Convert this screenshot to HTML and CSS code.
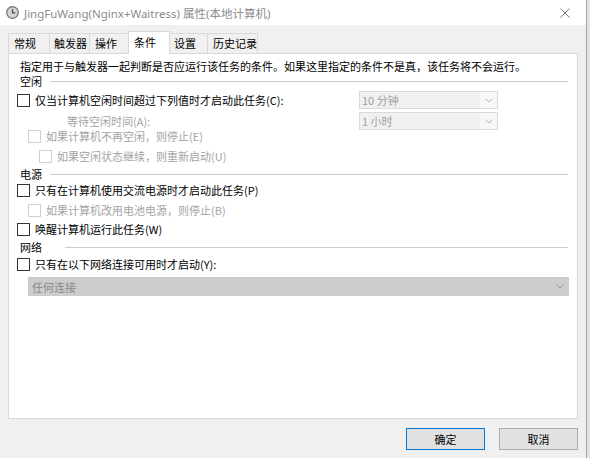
FILE: index.html
```html
<!DOCTYPE html>
<html lang="zh-CN">
<head>
<meta charset="utf-8">
<title>属性</title>
<link rel="stylesheet" href="styles.css">
</head>
<body>
<div class="window">
  <div class="titlebar">
    <svg class="app-icon" viewBox="0 0 13 13" width="13" height="13">
      <circle cx="6.5" cy="6.5" r="5.8" fill="#d4d4d4" stroke="#6e6e6e" stroke-width="1.2"/>
      <path d="M6.5 3.2 V6.8 H9.3" fill="none" stroke="#444" stroke-width="1.3"/>
    </svg>
    <span class="title">JingFuWang(Nginx+Waitress) 属性(本地计算机)</span>
    <svg class="close" viewBox="0 0 10 10" width="10" height="10">
      <path d="M0.5 0.5 L9.5 9.5 M9.5 0.5 L0.5 9.5" stroke="#7a7a7a" stroke-width="1"/>
    </svg>
  </div>
  <div class="tabs">
    <div class="tab w1">常规</div>
    <div class="tab w2">触发器</div>
    <div class="tab w3">操作</div>
    <div class="tab w4 active">条件</div>
    <div class="tab w5">设置</div>
    <div class="tab w6">历史记录</div>
  </div>
  <div class="panel">
    <div class="line desc">指定用于与触发器一起判断是否应运行该任务的条件。如果这里指定的条件不是真，该任务将不会运行。</div>

    <div class="line group m1"><span>空闲</span><span class="rule"></span></div>
    <div class="line split m3">
      <div class="check lvl0"><span class="cb"></span><span>仅当计算机空闲时间超过下列值时才启动此任务(C):</span></div>
      <div class="combo"><span class="val">10 分钟</span><span class="arrow"><svg viewBox="0 0 8 5" width="8" height="5"><polyline points="0.5,0.5 4,4 7.5,0.5" fill="none" stroke="#b4b4b4" stroke-width="1"/></svg></span></div>
    </div>
    <div class="line split m7">
      <div class="wait dis">等待空闲时间(A):</div>
      <div class="combo"><span class="val">1 小时</span><span class="arrow"><svg viewBox="0 0 8 5" width="8" height="5"><polyline points="0.5,0.5 4,4 7.5,0.5" fill="none" stroke="#b4b4b4" stroke-width="1"/></svg></span></div>
    </div>
    <div class="line check lvl1 dis m3"><span class="cb"></span><span>如果计算机不再空闲，则停止(E)</span></div>
    <div class="line check lvl2 dis m6"><span class="cb"></span><span>如果空闲状态继续，则重新启动(U)</span></div>

    <div class="line group m4"><span>电源</span><span class="rule"></span></div>
    <div class="line check lvl0 m2"><span class="cb"></span><span>只有在计算机使用交流电源时才启动此任务(P)</span></div>
    <div class="line check lvl1 dis m6"><span class="cb"></span><span>如果计算机改用电池电源，则停止(B)</span></div>
    <div class="line check lvl0 m5"><span class="cb"></span><span>唤醒计算机运行此任务(W)</span></div>

    <div class="line group wide-gap m4"><span>网络</span><span class="rule"></span></div>
    <div class="line check lvl0 m3"><span class="cb"></span><span>只有在以下网络连接可用时才启动(Y):</span></div>
    <div class="netcombo"><span class="val">任何连接</span><svg viewBox="0 0 8 5" width="8" height="5"><polyline points="0.5,0.5 4,4 7.5,0.5" fill="none" stroke="#9a9a9a" stroke-width="1"/></svg></div>
  </div>
  <div class="buttons">
    <div class="btn default">确定</div>
    <div class="btn">取消</div>
  </div>
</div>
<div class="edge"></div>
</body>
</html>
```

FILE: styles.css
```css
html, body {
  margin: 0;
  padding: 0;
}
body {
  width: 590px;
  height: 458px;
  overflow: hidden;
  display: flex;
  background: #f0f0f0;
  font-family: "Noto Sans CJK SC", "Microsoft YaHei", sans-serif;
  font-size: 11px;
  color: #000;
}
.window {
  width: 586px;
  height: 458px;
  background: #f0f0f0;
  border-right: 1px solid #a2a2a2;
}
.edge {
  flex: 1;
  background: #e4e4e4;
}

/* title bar */
.titlebar {
  height: 25px;
  background: #fff;
  display: flex;
  align-items: center;
}
.app-icon {
  margin-left: 6px;
  flex: none;
}
.title {
  margin-left: 5px;
  font-family: "Noto Sans", "Noto Sans CJK SC", sans-serif;
  font-size: 11.5px;
  color: #8c8c8c;
  white-space: nowrap;
}
.close {
  margin-left: auto;
  margin-right: 16px;
  flex: none;
}

/* tabs */
.tabs {
  height: 28px;
  display: flex;
  align-items: flex-end;
  padding-left: 8px;
}
.tab {
  position: relative;
  height: 20px;
  box-sizing: border-box;
  border: 1px solid #d9d9d9;
  border-bottom: none;
  background: #f0f0f0;
  padding-left: 5px;
  line-height: 19px;
  margin-right: -1px;
  white-space: nowrap;
}
.tab.active {
  height: 23px;
  margin-bottom: -1px;
  background: #fff;
  z-index: 1;
  line-height: 20px;
}
.w1 { width: 42px; }
.w2 { width: 41px; padding-left: 4px; }
.w3 { width: 40px; }
.w4 { width: 42px; }
.w5 { width: 39px; padding-left: 4px; }
.w6 { width: 51px; }

/* panel */
.panel {
  width: 570px;
  height: 366px;
  box-sizing: border-box;
  margin-left: 8px;
  border: 1px solid #d9d9d9;
  background: #fff;
  padding: 5px 9px 0 11px;
}
.line {
  height: 14px;
  line-height: 14px;
  white-space: nowrap;
}
.m1 { margin-top: 1px; }
.m2 { margin-top: 2px; }
.m3 { margin-top: 3px; }
.m4 { margin-top: 4px; }
.m5 { margin-top: 5px; }
.m6 { margin-top: 6px; }
.m7 { margin-top: 7px; }

.group {
  display: flex;
  align-items: center;
}
.rule {
  flex: 1;
  height: 1px;
  background: #cdcdcd;
  margin-left: 8px;
}
.wide-gap .rule { margin-left: 23px; }

.check {
  display: flex;
  align-items: center;
}
.cb {
  width: 13px;
  height: 13px;
  box-sizing: border-box;
  border: 1px solid #333;
  background: #fff;
  margin-right: 5px;
  flex: none;
}
.lvl0 { margin-left: -3px; }
.lvl1 { margin-left: 8px; }
.lvl2 { margin-left: 19px; }
.dis { color: #a3a3a3; }
.dis .cb { border-color: #cfcfcf; }

.split {
  display: grid;
  grid-template-columns: 339px 139px;
  align-items: center;
}
.wait { padding-left: 47px; }
.combo {
  width: 139px;
  height: 18px;
  box-sizing: border-box;
  border: 1px solid #dadada;
  background: #f0f0f0;
  display: flex;
}
.combo .val {
  flex: 1;
  color: #a0a0a0;
  padding-left: 2px;
  line-height: 16px;
}
.combo .arrow {
  width: 17px;
  background: #f7f7f7;
  display: flex;
  align-items: center;
  justify-content: center;
}

.netcombo {
  margin-top: 6px;
  margin-left: 8px;
  width: 541px;
  height: 19px;
  box-sizing: border-box;
  background: #cccccc;
  display: flex;
  align-items: center;
  padding: 0 5px 0 4px;
  color: #8a8a8a;
}
.netcombo .val { flex: 1; }

/* buttons */
.buttons {
  display: flex;
  justify-content: flex-end;
  gap: 14px;
  padding: 9px 8px 0 0;
}
.btn {
  width: 79px;
  height: 22px;
  box-sizing: border-box;
  border: 1px solid #adadad;
  background: #e1e1e1;
  text-align: center;
  line-height: 20px;
}
.btn.default {
  border-color: #0078d7;
}
```
